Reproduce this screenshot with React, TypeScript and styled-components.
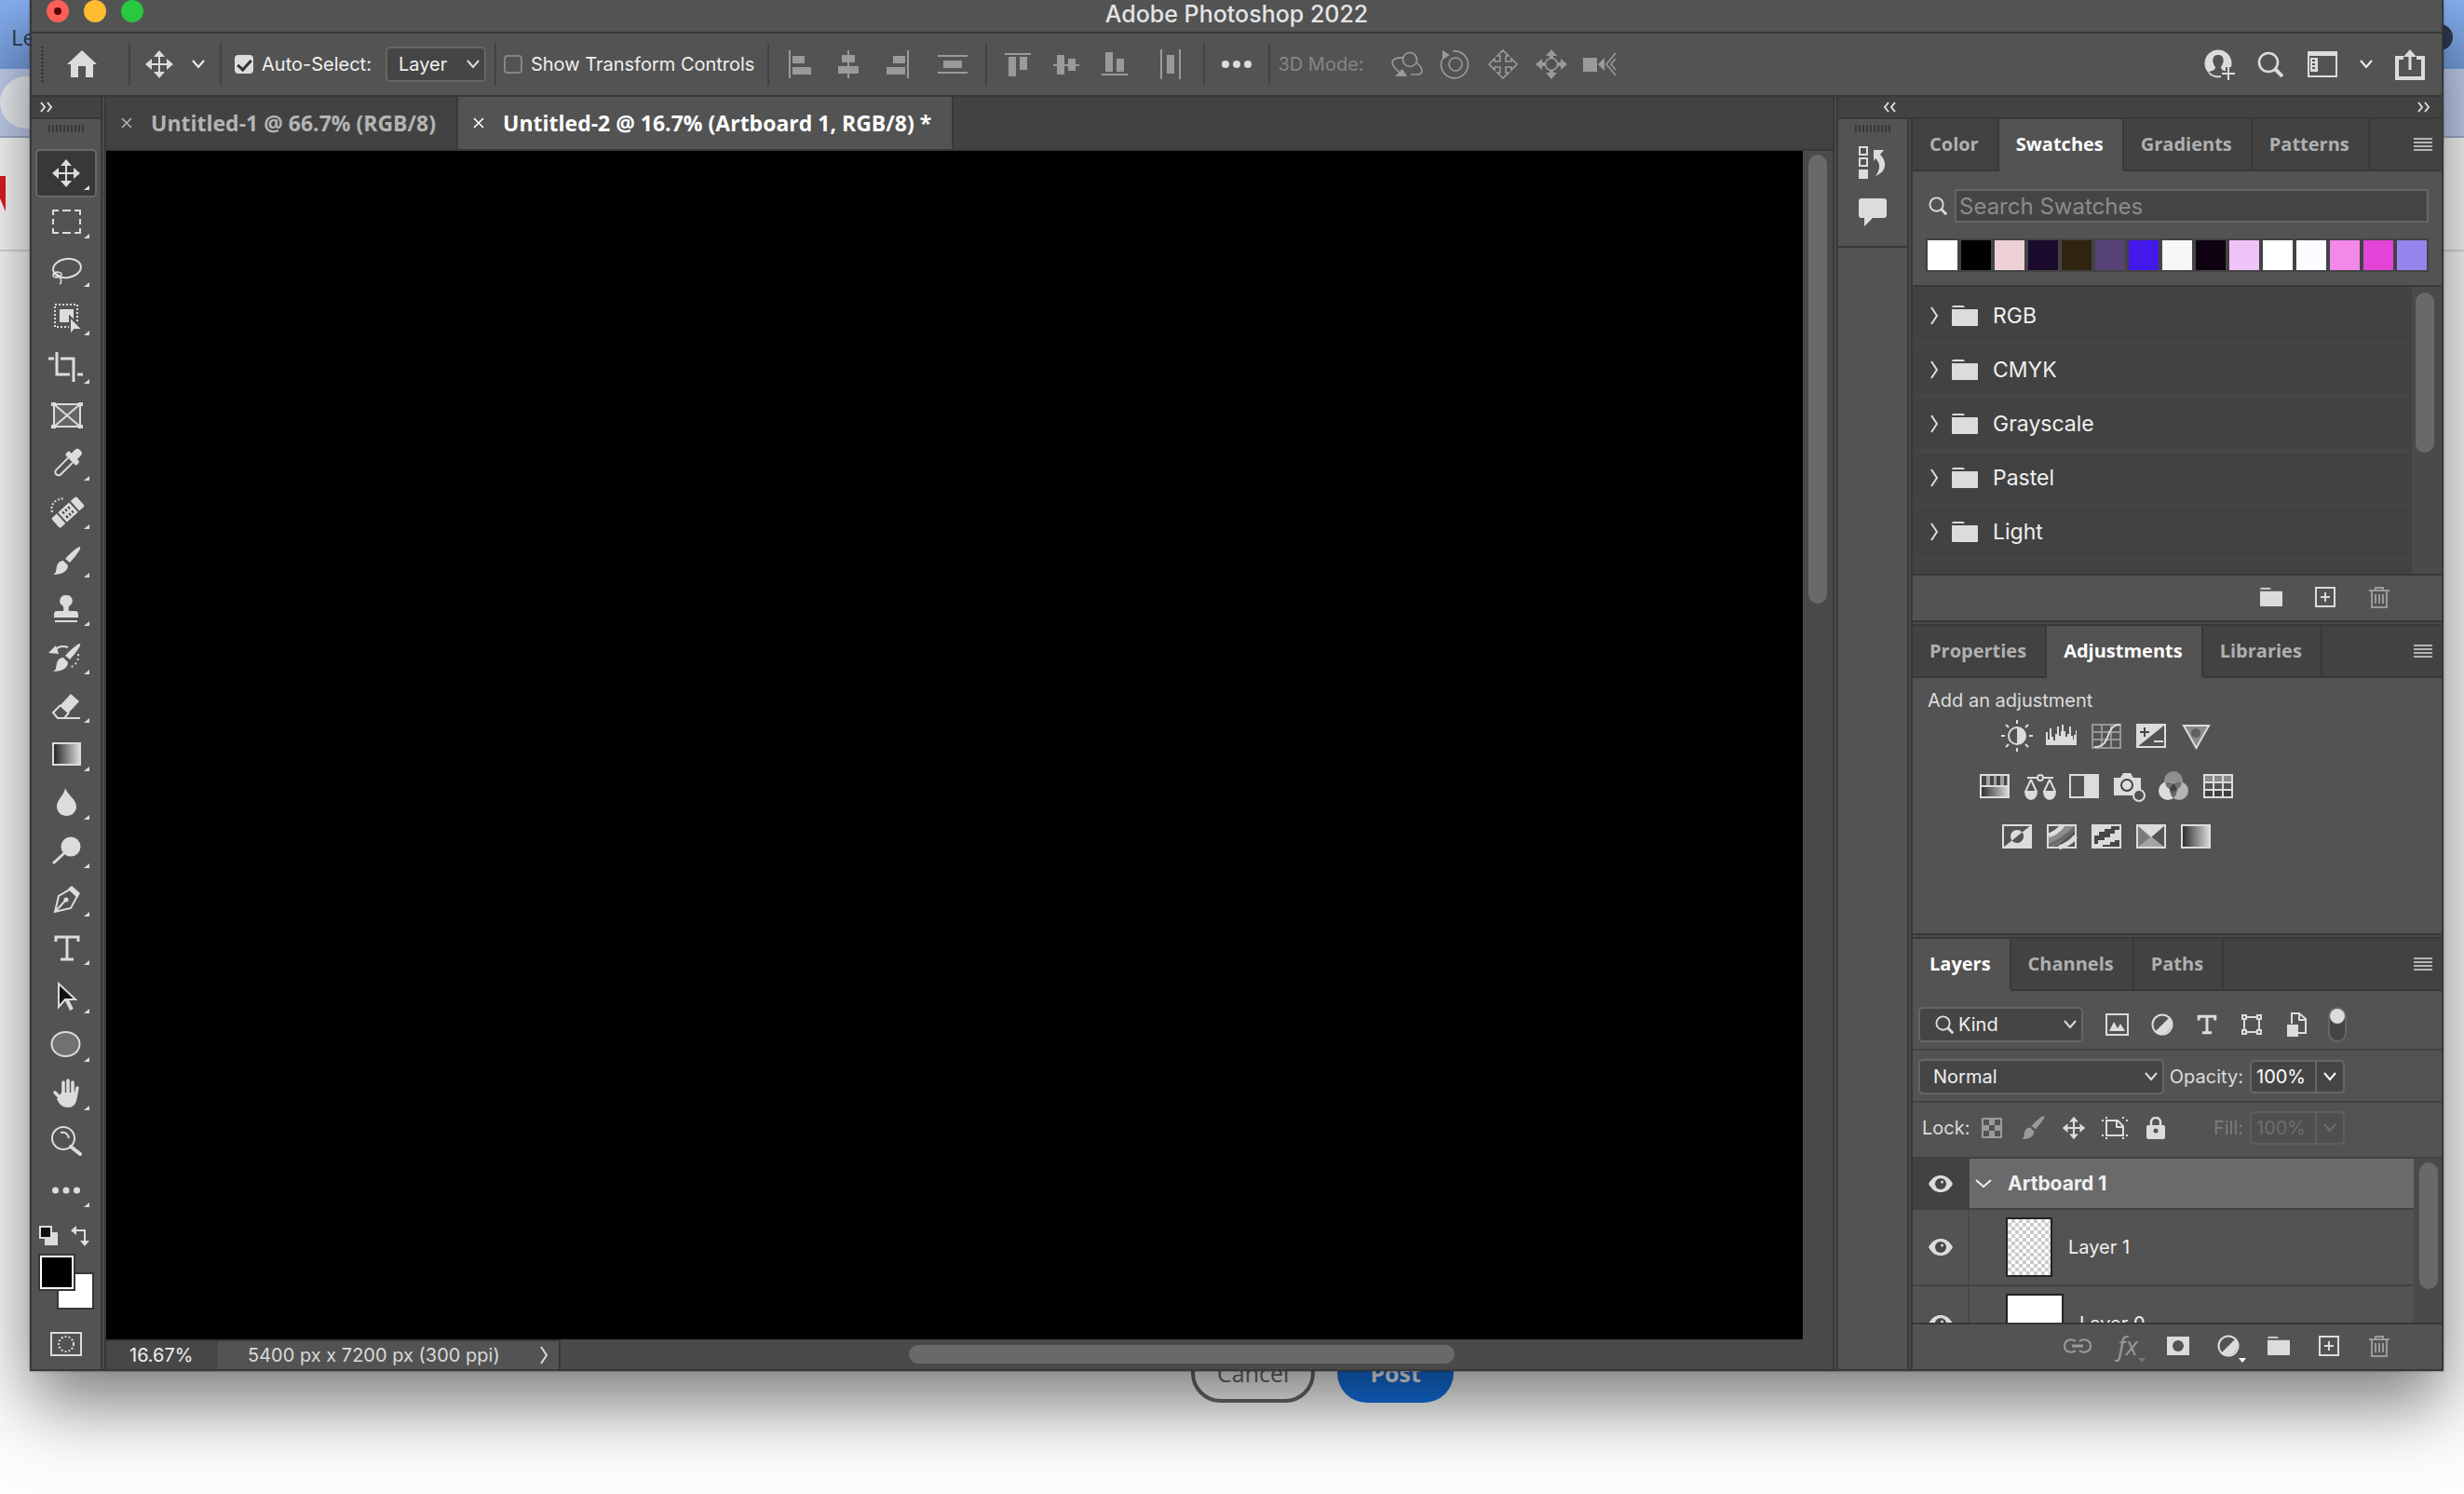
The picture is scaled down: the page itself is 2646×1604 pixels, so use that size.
import React from "react";
import styled, { createGlobalStyle, css } from "styled-components";

const c = {
  panel: "#535353",
  well: "#424242",
  track: "#4a4a4a",
  line: "#383838",
  edge: "#666666",
  icon: "#dcdcdc",
  muted: "#9a9a9a",
  text: "#f0f0f0",
};

const ui = `Inter, "Liberation Sans", sans-serif`;
const tabFont = `"Open Sans", "Noto Sans", sans-serif`;

const GlobalStyle = createGlobalStyle`
  * { box-sizing: border-box; }
  body { margin: 0; background: #fff; font-family: ${ui}; overflow: hidden; }
  button, input, select { font: inherit; color: inherit; margin: 0; }
  button { background: none; border: 0; padding: 0; cursor: pointer; }
  h1, h2, p, ul { margin: 0; padding: 0; font-weight: 400; }
  li { list-style: none; }
  svg { display: block; flex: none; }
`;

/* ---------- page behind the window ---------- */

const Desktop = styled.div`
  position: relative;
  display: flex;
  flex-direction: column;
  height: 100vh;
  overflow: hidden;
  background: #fdfdfd;
`;

const BrowserTabs = styled.div`
  display: flex;
  align-items: center;
  justify-content: space-between;
  height: 74px;
  padding: 6px 12px 0;
  background: linear-gradient(#86aff0, #759fde);
  color: #2d3a52;
  font: 400 24px/32px ${tabFont};
`;

const TabBadge = styled.span`
  width: 28px;
  height: 28px;
  border-radius: 50%;
  background: #2e3850;
`;

const AddressBar = styled.div`
  display: flex;
  align-items: center;
  height: 74px;
  background: #c3d0f0;
  border-bottom: 2px solid #a3b0cc;
`;

const AddressField = styled.div`
  width: 300px;
  height: 56px;
  border-radius: 28px;
  background: #eef2f6;
`;

const SiteHeader = styled.div`
  display: flex;
  align-items: center;
  height: 122px;
  border-bottom: 2px solid #dcdcdc;
`;

const SiteBody = styled.div`
  flex: 1;
  display: flex;
  align-items: flex-end;
  justify-content: center;
  gap: 24px;
  padding: 0 0 98px 194px;
`;

const PageButton = styled.button<{ $primary?: boolean }>`
  height: 64px;
  padding: 0 ${(p) => (p.$primary ? 35 : 24)}px;
  border-radius: 32px;
  border: ${(p) => (p.$primary ? "0" : "4px solid #6a6a6a")};
  background: ${(p) => (p.$primary ? "#1473e6" : "transparent")};
  color: ${(p) => (p.$primary ? "#fff" : "#6a6a6a")};
  font: ${(p) => (p.$primary ? 700 : 400)} 25px/32px ${tabFont};
`;

/* ---------- application window ---------- */

const Window = styled.div`
  position: absolute;
  inset: 0 22px 132px 32px;
  display: flex;
  flex-direction: column;
  border: 2px solid ${c.line};
  border-top: 0;
  background: ${c.panel};
  color: ${c.text};
  font-size: 20px;
  line-height: 24px;
  box-shadow: 0 0 2px rgba(0, 0, 0, 0.5), 0 34px 74px rgba(0, 0, 0, 0.52);
`;

const TitleBar = styled.header`
  display: grid;
  grid-template-columns: 1fr auto 1fr;
  height: 36px;
  border-bottom: 2px solid ${c.line};
`;

const Lights = styled.div`
  display: flex;
  gap: 16px;
  padding-left: 16px;
`;

const Light = styled.button<{ $color: string }>`
  display: grid;
  place-items: center;
  width: 24px;
  height: 24px;
  border-radius: 50%;
  background: ${(p) => p.$color};
`;

const LightDot = styled.span`
  width: 8px;
  height: 8px;
  border-radius: 50%;
  background: #5a0000;
`;

const AppTitle = styled.h1`
  font-size: 25px;
  line-height: 30px;
  font-weight: 500;
  color: #e4e4e4;
`;

const OptionsBar = styled.div`
  display: flex;
  align-items: center;
  height: 68px;
  padding: 0 18px 0 10px;
  border-bottom: 2px solid ${c.line};
`;

const Sep = styled.span`
  flex: none;
  width: 2px;
  height: 46px;
  background: ${c.well};
`;

const DotGrip = styled.span`
  width: 3px;
  height: 38px;
  background: repeating-linear-gradient(${c.line} 0 2px, transparent 2px 4px);
`;

const Grip = styled.span<{ $w: number }>`
  width: ${(p) => p.$w}px;
  height: 8px;
  background: repeating-linear-gradient(90deg, ${c.line} 0 2px, transparent 2px 4px);
`;

const OptionGroup = styled.div<{ $gap?: number; $pad?: string }>`
  display: flex;
  align-items: center;
  gap: ${(p) => p.$gap ?? 0}px;
  padding: ${(p) => p.$pad ?? "0"};
`;

const AlignGroup = styled(OptionGroup)`
  > :last-child { margin-left: 8px; }
`;

const IconButton = styled.button<{ $size?: number; $dim?: boolean; $menu?: boolean }>`
  position: relative;
  display: grid;
  place-items: center;
  width: ${(p) => p.$size ?? 32}px;
  height: ${(p) => p.$size ?? 32}px;
  color: ${(p) => (p.$dim ? c.muted : c.icon)};
  ${(p) =>
    p.$menu &&
    css`
      &::after {
        content: "";
        position: absolute;
        right: -3px;
        bottom: -2px;
        border: solid transparent;
        border-width: 5px 4px 0;
        border-top-color: ${p.$dim ? "#777" : "#fff"};
      }
    `}
`;

const CheckLabel = styled.label`
  display: flex;
  align-items: center;
  gap: 9px;
  white-space: nowrap;
`;

const Check = styled.input.attrs({ type: "checkbox" })`
  appearance: none;
  display: grid;
  place-items: center;
  width: 20px;
  height: 20px;
  border: 2px solid #858585;
  border-radius: 4px;
  &:checked {
    background: #dcdcdc;
    border-color: #dcdcdc;
  }
  &:checked::before {
    content: "";
    width: 6px;
    height: 12px;
    margin-bottom: 3px;
    border: solid #333;
    border-width: 0 3px 3px 0;
    transform: rotate(42deg);
  }
`;

const DimText = styled.span`
  margin-right: 7px;
  color: #858585;
  white-space: nowrap;
`;

const Spacer = styled.span`
  flex: 1;
`;

const Work = styled.div`
  flex: 1;
  min-height: 0;
  display: flex;
`;

const Splitter = styled.div`
  flex: none;
  width: 6px;
  border: solid ${c.line};
  border-width: 0 2px;
  background: ${c.track};
`;

/* ---------- tool column ---------- */

const ToolColumn = styled.nav`
  flex: none;
  width: 74px;
  display: flex;
  flex-direction: column;
  align-items: center;
`;

const Collapse = styled.div<{ $pad: string }>`
  display: flex;
  align-self: stretch;
  align-items: center;
  justify-content: space-between;
  height: 24px;
  padding: ${(p) => p.$pad};
  background: ${c.well};
  border-bottom: 2px solid ${c.line};
  color: ${c.icon};
`;

const ToolList = styled.div`
  display: flex;
  flex-direction: column;
  padding-top: 18px;
`;

const GripRow = styled.div`
  display: flex;
  justify-content: center;
  height: 14px;
  padding-top: 6px;
`;

const ToolButton = styled.button<{ $active?: boolean }>`
  width: 66px;
  height: 52px;
  border: 2px solid ${(p) => (p.$active ? "#686868" : "transparent")};
  border-radius: 5px;
  background: ${(p) => (p.$active ? c.line : "none")};
  color: ${c.icon};
`;

const MiniRow = styled.div`
  display: flex;
  justify-content: space-between;
  align-self: stretch;
  padding: 12px 12px 0 8px;
  color: ${c.icon};
`;

const ColorPair = styled.div`
  display: grid;
  grid-template: repeat(3, 20px) / repeat(3, 20px);
  margin-top: 8px;
`;

const ColorChip = styled.button<{ $color: string; $front?: boolean }>`
  grid-area: ${(p) => (p.$front ? "1 / 1 / 3 / 3" : "2 / 2 / 4 / 4")};
  z-index: ${(p) => (p.$front ? 1 : 0)};
  border: 2px solid ${c.line};
  background: ${(p) => p.$color};
  box-shadow: ${(p) => (p.$front ? "inset 0 0 0 2px #fff" : "none")};
`;

const MaskButton = styled.button`
  margin-top: 24px;
  color: ${c.icon};
`;

/* ---------- document ---------- */

const DocumentArea = styled.main`
  flex: 1;
  min-width: 0;
  display: flex;
  flex-direction: column;
`;

const DocTabs = styled.div`
  display: flex;
  height: 58px;
  background: ${c.well};
  border-bottom: 2px solid ${c.line};
`;

const DocTab = styled.div<{ $active?: boolean }>`
  display: flex;
  align-items: center;
  gap: 20px;
  padding: 0 22px 0 16px;
  border-right: 2px solid ${c.line};
  background: ${(p) => (p.$active ? c.panel : "none")};
  color: ${(p) => (p.$active ? "#fff" : "#b4b4b4")};
  font: 700 23px/28px ${tabFont};
  white-space: nowrap;
`;

const CanvasRow = styled.div`
  flex: 1;
  min-height: 0;
  display: flex;
`;

const Canvas = styled.div`
  flex: 1;
  background: #000;
`;

const ScrollTrack = styled.div<{ $w: number; $pad: string }>`
  flex: none;
  width: ${(p) => p.$w}px;
  padding: ${(p) => p.$pad};
  background: ${c.track};
`;

const Thumb = styled.div<{ $len: number }>`
  height: ${(p) => p.$len}%;
  border-radius: 10px;
  background: #696969;
`;

const StatusBar = styled.footer`
  display: flex;
  height: 32px;
  background: ${c.track};
`;

const Zoom = styled.input`
  width: 120px;
  padding: 0 0 0 25px;
  border: 0;
  border-top: 2px solid ${c.line};
  background: #474747;
`;

const DocInfo = styled.div`
  display: flex;
  align-items: center;
  justify-content: space-between;
  width: 368px;
  padding: 0 10px 0 32px;
  border: 2px solid ${c.line};
  border-width: 2px 2px 0 0;
  background: ${c.panel};
  color: #dadada;
  white-space: nowrap;
`;

const HTrack = styled.div`
  flex: 1;
  display: flex;
  justify-content: center;
  margin-right: 32px;
  padding: 6px 0;
`;

const HThumb = styled.div`
  width: 44%;
  border-radius: 10px;
  background: #696969;
`;

/* ---------- docked panels ---------- */

const Dock = styled.div`
  flex: none;
  display: flex;
  flex-direction: column;
`;

const DockBody = styled.div`
  flex: 1;
  min-height: 0;
  display: flex;
`;

const IconStrip = styled.div`
  width: 74px;
`;

const StripGroup = styled.div`
  display: flex;
  flex-direction: column;
  align-items: center;
  gap: 10px;
  height: 138px;
  border-bottom: 2px solid ${c.line};
`;

const Panels = styled.div`
  width: 568px;
  display: flex;
  flex-direction: column;
`;

const Panel = styled.section<{ $grow?: boolean }>`
  display: flex;
  flex-direction: column;
  ${(p) => p.$grow && css`flex: 1; min-height: 0;`}
`;

const PanelGap = styled.div`
  height: 6px;
  border: solid ${c.line};
  border-width: 2px 0;
  background: ${c.track};
`;

const TabStrip = styled.div`
  display: flex;
  height: 56px;
  background: ${c.well};
`;

const PanelTab = styled.button<{ $active?: boolean }>`
  padding: 0 20px 0 18px;
  border: solid ${c.line};
  border-width: 0 2px 2px 0;
  border-bottom-color: ${(p) => (p.$active ? c.panel : c.line)};
  background: ${(p) => (p.$active ? c.panel : "none")};
  color: ${(p) => (p.$active ? "#fff" : "#b0b0b0")};
  font: 700 20px/26px ${tabFont};
`;

const TabRest = styled.div`
  flex: 1;
  display: flex;
  align-items: center;
  justify-content: flex-end;
  padding-right: 10px;
  border-bottom: 2px solid ${c.line};
  color: #b4b4b4;
`;

const SearchRow = styled.label`
  display: flex;
  align-items: center;
  gap: 8px;
  padding: 19px 14px 0 17px;
  color: ${c.icon};
`;

const SearchField = styled.input`
  flex: 1;
  height: 36px;
  padding: 0 3px;
  border: 2px solid ${c.edge};
  background: #454545;
  font-size: 24px;
  &::placeholder { color: #8c8c8c; opacity: 1; }
`;

const SwatchStrip = styled.div`
  display: flex;
  align-self: flex-start;
  gap: 4px;
  margin: 17px 14px 14px;
  padding: 2px;
  background: #434343;
`;

const Swatch = styled.button<{ $color: string }>`
  width: 32px;
  height: 32px;
  background: ${(p) => p.$color};
`;

const FolderArea = styled.div`
  display: flex;
  height: 312px;
  border: solid ${c.line};
  border-width: 2px 0;
  background: ${c.well};
`;

const FolderList = styled.ul`
  flex: 1;
  padding: 4px 4px 0;
  overflow: hidden;
`;

const FolderRow = styled.li`
  display: flex;
  align-items: center;
  height: 58px;
  padding-left: 15px;
  border-bottom: 4px solid #464646;
  color: ${c.icon};
  font-size: 23px;
`;

const FolderName = styled.span`
  margin-left: 16px;
  color: ${c.text};
`;

const FolderIcon = styled.span`
  margin-left: 13px;
`;

const PanelFooter = styled.div<{ $gap: number }>`
  display: flex;
  align-items: center;
  justify-content: flex-end;
  gap: ${(p) => p.$gap}px;
  height: 48px;
  padding: 0 51px 2px 0;
`;

const AdjustBody = styled.div`
  height: 274px;
  padding: 12px 16px;
  color: ${c.icon};
`;

const AdjustRows = styled.div`
  display: inline-flex;
  flex-direction: column;
  gap: 20px;
  padding: 9px 0 0 55px;
`;

const AdjustRow = styled.div`
  display: flex;
  justify-content: center;
  gap: 14px;
`;

const ControlRow = styled.div<{ $pad: string }>`
  display: flex;
  align-items: center;
  justify-content: space-between;
  padding: ${(p) => p.$pad};
  border-bottom: 2px solid ${c.well};
`;

const SelectBox = styled.span<{ $w: number }>`
  display: grid;
  align-items: center;
  width: ${(p) => p.$w}px;
  > * { grid-area: 1 / 1; }
  > svg { z-index: 1; pointer-events: none; color: ${c.icon}; }
  > svg:last-child { justify-self: end; margin-right: 7px; }
  > svg:not(:last-child) { margin-left: 18px; }
`;

const Select = styled.select<{ $pad: number }>`
  appearance: none;
  width: 100%;
  height: 38px;
  padding: 0 24px 0 ${(p) => p.$pad}px;
  border: 2px solid ${c.edge};
  border-radius: 5px;
  background: #454545;
`;

const FilterSet = styled(OptionGroup)`
  > :last-child { margin-left: 2px; }
`;

const Toggle = styled.input.attrs({ type: "checkbox" })`
  appearance: none;
  width: 20px;
  height: 38px;
  padding: 0;
  border: 2px solid ${c.edge};
  border-radius: 10px;
  background: #454545;
  &::before {
    content: "";
    display: block;
    width: 16px;
    height: 16px;
    border-radius: 50%;
    background: ${c.icon};
  }
`;

const Meter = styled.div<{ $off?: boolean }>`
  display: flex;
  align-items: center;
  gap: 7px;
  color: ${(p) => (p.$off ? "#7c7c7c" : "#dcdcdc")};
`;

const MeterBox = styled.div<{ $off?: boolean }>`
  display: flex;
  width: 102px;
  height: 36px;
  border: 2px solid ${(p) => (p.$off ? "#5f5f5f" : c.edge)};
  border-radius: 5px;
  background: ${(p) => (p.$off ? "#4f4f4f" : "#454545")};
  color: ${(p) => (p.$off ? "#6e6e6e" : "#fff")};
`;

const MeterValue = styled.input`
  width: 70px;
  padding: 0 0 0 5px;
  border: 0;
  border-right: 2px solid ${c.edge};
  background: none;
  &:disabled { border-color: #5f5f5f; color: inherit; }
`;

const MeterArrow = styled.button`
  flex: 1;
  display: grid;
  place-items: center;
`;

const LockTools = styled.div`
  display: flex;
  align-items: center;
  gap: 8px;
  color: #dcdcdc;
`;

const LayerArea = styled.div`
  flex: 1;
  min-height: 0;
  display: flex;
  overflow: hidden;
  border-bottom: 2px solid ${c.line};
`;

const LayerList = styled.ul`
  flex: 1;
`;

const LayerRow = styled.li<{ $group?: boolean }>`
  display: flex;
  height: ${(p) => (p.$group ? 55 : 82)}px;
  border-bottom: 2px solid ${c.well};
`;

const EyeCell = styled.button<{ $dark?: boolean }>`
  width: 61px;
  display: grid;
  place-items: center;
  border-right: 2px solid ${(p) => (p.$dark ? c.well : "#484848")};
  background: ${(p) => (p.$dark ? c.well : "none")};
  color: ${c.icon};
`;

const LayerCell = styled.div<{ $selected?: boolean }>`
  flex: 1;
  display: flex;
  align-items: center;
  gap: 17px;
  padding-left: ${(p) => (p.$selected ? 6 : 39)}px;
  background: ${(p) => (p.$selected ? "#6a6a6a" : "none")};
  font-size: ${(p) => (p.$selected ? 21 : 20)}px;
  font-weight: ${(p) => (p.$selected ? 700 : 400)};
`;

const LayerThumb = styled.span<{ $w: number; $checker?: boolean }>`
  width: ${(p) => p.$w}px;
  height: 64px;
  border: 2px solid #222;
  background: ${(p) =>
    p.$checker ? "repeating-conic-gradient(#cbcbcb 0 25%, #fff 0 50%) 0 0 / 8px 8px" : "#fff"};
`;

const FxButton = styled(IconButton)`
  font: italic 400 27px/30px "Open Sans", sans-serif;
`;

/* ---------- icons ---------- */

type IconProps = { w: number; h?: number; children: React.ReactNode };

const Icon = ({ w, h = w, children }: IconProps) => (
  <svg width={w} height={h} viewBox={`0 0 ${w} ${h}`} fill="none" stroke="currentColor" strokeWidth="2" aria-hidden="true">
    {children}
  </svg>
);

const F = { fill: "currentColor", stroke: "none" };

const Chevron = ({ w = 14 }: { w?: number }) => (
  <Icon w={w} h={10}>
    <path d={`M1 1l${w / 2 - 1} 7 ${w / 2 - 1}-7`} />
  </Icon>
);

const RightChevron = () => (
  <Icon w={10} h={20}>
    <path d="M1 1l6 9-6 9" />
  </Icon>
);

const DoubleChevron = ({ left }: { left?: boolean }) => (
  <Icon w={14} h={12}>
    <path d={left ? "M6 1L2 6l4 5M13 1L9 6l4 5" : "M1 1l4 5-4 5M8 1l4 5-4 5"} />
  </Icon>
);

const Burger = () => (
  <Icon w={20} h={14}>
    <path d="M0 1h20M0 5h20M0 9h20M0 13h20" />
  </Icon>
);

const Close = () => (
  <Icon w={12}>
    <path d="M1 1l10 10M11 1L1 11" strokeWidth="1.6" />
  </Icon>
);

const Folder = ({ w = 28 }: { w?: number }) => (
  <svg width={w} height={w === 28 ? 22 : 20} viewBox="0 0 28 22" fill="currentColor" preserveAspectRatio="none" aria-hidden="true">
    <path d="M0 2q0-2 2-2h10q1 0 2 2zM0 4h27q1 0 1 1v16q0 1-1 1H1q-1 0-1-1z" />
  </svg>
);

const Plus = () => (
  <Icon w={22}>
    <path d="M1 1h20v20H1zM11 6v10M6 11h10" />
  </Icon>
);

const Trash = () => (
  <Icon w={22} h={24}>
    <path d="M0 5h22M3 5v18h16V5M7 5V2h8v3M7 9v10M11 9v10M15 9v10" />
  </Icon>
);

const Magnifier = ({ w = 28 }: { w?: number }) => (
  <svg width={w} height={w} viewBox="0 0 28 28" fill="none" stroke="currentColor" aria-hidden="true">
    <circle cx="12" cy="12" r="10" strokeWidth="2.6" />
    <path d="M19 19l8 8" strokeWidth="4" />
  </svg>
);

const MoveArt = () => (
  <>
    <path d="M20 8v24M8 20h24" />
    <path {...F} d="M20 5l6 7H14zM20 35l6-7H14zM5 20l7-6v12zM35 20l-7-6v12z" />
  </>
);

const MoveIcon = () => (
  <svg width="32" height="32" viewBox="4 4 32 32" fill="none" stroke="currentColor" strokeWidth="2" aria-hidden="true">
    <MoveArt />
  </svg>
);

const Brush = () => (
  <g {...F}>
    <path d="M35 5c1 2-2 7-11 17l-5-4C27 9 33 5 35 5z" />
    <path d="M17 20l5 5c0 6-6 10-16 10 4-2 3-5 4-9 1-4 4-6 7-6z" />
  </g>
);

const HalfCircle = () => (
  <Icon w={24}>
    <circle cx="12" cy="12" r="10.5" />
    <path {...F} d="M20 4A11.500 11.500 0 0 1 4 20z" />
  </Icon>
);

const Eye = () => (
  <Icon w={26} h={20}>
    <path {...F} d="M0 10C4 3 8 1 13 1s9 2 13 9c-4 7-8 9-13 9S4 17 0 10z" />
    <circle cx="13" cy="10" r="6" fill="#464646" stroke="none" />
    <circle cx="14.500" cy="8" r="1.500" {...F} />
  </Icon>
);

const TypeArt = () => <path d="M9 13V8h24v5M21 8v23M14 32h14" strokeWidth="3" />;

const tools: { name: string; art: React.ReactNode; plain?: boolean }[] = [
  { name: "Move", art: <MoveArt /> },
  { name: "Rectangular marquee", art: <path d="M6 13V8h6M16 8h9M29 8h6v5M35 17v6M35 27v5h-6M25 32h-9M12 32H6v-5M6 23v-6" /> },
  {
    name: "Lasso",
    art: (
      <>
        <ellipse cx="21" cy="18" rx="15" ry="10" transform="rotate(-8 21 18)" />
        <path d="M6 24c2-3 10-2 9 1s-8 4-9 1 6-3 8 3c1 3 1 5-1 6" strokeWidth="1.6" />
      </>
    ),
  },
  {
    name: "Object selection",
    art: (
      <>
        <path d="M8 5h24v24H8z" strokeDasharray="2 2" />
        <path {...F} d="M13 10h15v14H13z" />
        <path d="M24 18v20l5-6h9z" fill="currentColor" stroke={c.panel} />
      </>
    ),
  },
  { name: "Crop", art: <path d="M1 11h6M14 11h14v25M10 4v24h14M32 28h6" strokeWidth="3" /> },
  {
    name: "Frame",
    plain: true,
    art: (
      <>
        <path d="M7 8h28v24H7z" fill="#666" />
        <path d="M7 8l28 24M35 8L7 32" />
        <path {...F} d="M4 6h5v4H4zM33 6h5v4h-5zM4 30h5v4H4zM33 30h5v4h-5z" />
      </>
    ),
  },
  {
    name: "Eyedropper",
    art: (
      <g transform="rotate(45 20 20)">
        <rect x="16" y="-1" width="9" height="14" rx="4" {...F} />
        <rect x="12" y="8" width="17" height="6" rx="2" {...F} />
        <path d="M17 14v18a3.500 3.500 0 0 0 7 0V14" />
      </g>
    ),
  },
  {
    name: "Spot healing brush",
    art: (
      <>
        <path d="M5 20c-2-8 2-14 13-15" strokeDasharray="2 2" />
        <g transform="rotate(-42 22 20)">
          <rect x="4" y="13" width="36" height="14" rx="2" {...F} />
          <path d="M13 12v16M31 12v16" stroke={c.panel} />
          <path d="M17 17h2M21 17h2M25 17h2M17 23h2M21 23h2M25 23h2" stroke="#444" strokeWidth="3" />
        </g>
      </>
    ),
  },
  { name: "Brush", art: <Brush /> },
  {
    name: "Clone stamp",
    art: (
      <>
        <path {...F} d="M20 5a6 6 0 0 1 4 11q-2 2-1 6h7q3 0 3 4v3H7v-3q0-4 3-4h7q1-4-1-6a6 6 0 0 1 4-11z" />
        <path d="M8 33h24" />
      </>
    ),
  },
  {
    name: "History brush",
    art: (
      <>
        <Brush />
        <path d="M8 13c3-5 8-6 14-4" />
        <path {...F} d="M1 15l8-8 3 9z" />
        <path d="M33 16c1 8-3 12-9 15" strokeDasharray="2 3" />
      </>
    ),
  },
  {
    name: "Eraser",
    art: (
      <>
        <path {...F} d="M25 7l9 8-12 13-9-8z" />
        <path d="M14 19l-8 8 5 6h7l5-6M14 33h21" />
      </>
    ),
  },
  {
    name: "Gradient",
    art: (
      <>
        <defs>
          <linearGradient id="toolGradient">
            <stop stopColor="#222" />
            <stop offset="1" stopColor="#ddd" />
          </linearGradient>
        </defs>
        <path d="M6 8h29v23H6z" fill="url(#toolGradient)" />
      </>
    ),
  },
  { name: "Blur", art: <path {...F} d="M19 4c2 7 12 12 12 20 0 6-5 10-10.500 10S10 30 10 24c0-8 8-12 9-20z" /> },
  {
    name: "Dodge",
    art: (
      <>
        <circle cx="25" cy="15" r="10.500" {...F} />
        <path d="M18 22L6 33" strokeWidth="3" />
      </>
    ),
  },
  {
    name: "Pen",
    art: (
      <>
        <path d="M8 33l4-17 12-7 8 7-7 13zM9 32l10-11" />
        <circle cx="20" cy="20" r="2.500" {...F} />
        <path {...F} d="M22 8l4-3 9 8-3 5z" />
      </>
    ),
  },
  { name: "Type", art: <TypeArt /> },
  {
    name: "Path selection",
    art: (
      <>
        <path d="M20 22l6 12" strokeWidth="4" />
        <path d="M12 6v25l7-8h11z" fill="#111" />
      </>
    ),
  },
  { name: "Ellipse", art: <ellipse cx="19.500" cy="19" rx="15" ry="13" fill="#717171" /> },
  {
    name: "Hand",
    art: (
      <>
        <path d="M17 8v15M22 6v16M27 8v15M32 14l-2 10M8 19l8 8" strokeWidth="3.600" strokeLinecap="round" />
        <path {...F} d="M15 19h17c0 9-2 16-10 16-6 0-9-3-12-9z" />
      </>
    ),
  },
  {
    name: "Zoom",
    plain: true,
    art: (
      <>
        <circle cx="17" cy="16" r="12" />
        <path d="M14 10c5-1 8 2 9 6" />
        <path d="M25 25l10 8" strokeWidth="4" strokeLinecap="round" />
      </>
    ),
  },
  {
    name: "Edit toolbar",
    art: (
      <g {...F}>
        <circle cx="8.500" cy="20" r="3.500" />
        <circle cx="20" cy="20" r="3.500" />
        <circle cx="31.500" cy="20" r="3.500" />
      </g>
    ),
  },
];

const alignIcons: [string, string, string][] = [
  ["Align left edges", "M5 1v30", "M8 7h13v8H8zM8 19h20v8H8z"],
  ["Align horizontal centers", "M16 1v30", "M9 6h14v8H9zM5 18h22v8H5z"],
  ["Align right edges", "M28 1v30", "M12 7h13v8H12zM5 19h20v8H5z"],
  ["Distribute vertically", "M0 7h32M0 25h32", "M6 12h20v8H6z"],
];

const alignIcons2: [string, string, string][] = [
  ["Align top edges", "M2 5h28", "M6 8h8v21H6zM18 8h8v14h-8z"],
  ["Align vertical centers", "M2 17h28", "M6 6h8v21H6zM18 10h8v13h-8z"],
  ["Align bottom edges", "M2 27h28", "M6 3h8v21H6zM18 10h8v14h-8z"],
  ["Distribute horizontally", "M6 0v32M26 0v32", "M12 6h8v20h-8z"],
];

const modeIcons: [string, React.ReactNode][] = [
  [
    "Orbit",
    <>
      <circle cx="20" cy="11" r="7.500" />
      <path d="M13 9C4 8-1 12 2 17c2 4 7 8 12 11M27 14c8 7 8 13 0 13h-6" />
      <path {...F} d="M12 21l5 8H4z" />
    </>,
  ],
  [
    "Roll",
    <>
      <circle cx="17" cy="16" r="7" />
      <path d="M14 2a14.500 14.500 0 1 1-11 8" />
      <path {...F} d="M3 1l8 5-8 5z" />
    </>,
  ],
  [
    "Pan",
    <path d="M16 1l6 6h-3v6h6v-3l6 6-6 6v-3h-6v6h3l-6 6-6-6h3v-6H7v3l-6-6 6-6v3h6V7h-3z" />,
  ],
  [
    "Slide",
    <>
      <circle cx="16" cy="16" r="6.500" />
      <path {...F} d="M16 0l6 7h-4v3h-4V7h-4zM16 32l6-7h-4v-3h-4v3h-4zM-1 16l7-6v4h3v4H6v4zM33 16l-7-6v4h-3v4h3v4z" />
    </>,
  ],
  [
    "Camera zoom",
    <>
      <path {...F} d="M-2 9h15v15H-2zM14 16l7-7v14z" />
      <path d="M33 4L23 16l10 12M33 10l-5 6 5 6" />
    </>,
  ],
];

const AdjBox = ({ children }: { children: React.ReactNode }) => (
  <Icon w={34}>
    {children}
    <path d="M2 5h30v24H2z" />
  </Icon>
);

const adjustments: [string, React.ReactNode][][] = [
  [
    [
      "Brightness/Contrast",
      <Icon w={34}>
        <circle cx="17" cy="17" r="9" />
        <path {...F} d="M17 8a9 9 0 0 1 0 18z" />
        <path d="M17 0v4M17 30v4M0 17h4M30 17h4M5 5l3 3M26 26l3 3M29 5l-3 3M8 26l-3 3" />
      </Icon>,
    ],
    [
      "Levels",
      <Icon w={36} h={34}>
        <path {...F} d="M0 27V13h2v8h2V9h2v9h2v4h2v-7h2V7h2v10h2v-5h1V5h2v7h2v6h2v-3h2V7h2v10h2v4h1v-5h2v-5h1v16z" />
      </Icon>,
    ],
    [
      "Curves",
      <Icon w={34}>
        <path d="M2 5h30v25H2zM12 5v25M22 5v25M2 13h30M2 21h30" stroke="#969696" />
        <path d="M4 29C24 29 14 5 32 5" />
      </Icon>,
    ],
    [
      "Exposure",
      <AdjBox>
        <path {...F} d="M2 5h30L2 29z" />
        <path d="M10 8v10M5 13h10" stroke="#444" />
        <path d="M20 23h10" />
      </AdjBox>,
    ],
    [
      "Vibrance",
      <Icon w={34}>
        <path d="M4 6h27L17.500 30z" fill="#8a8a8a" />
        <circle cx="17" cy="14" r="5" fill="#606060" stroke="none" />
      </Icon>,
    ],
  ],
  [
    [
      "Hue/Saturation",
      <AdjBox>
        <path fill="url(#adjGradient)" stroke="none" d="M2 17h30v12H2z" />
        <path fill="#a0a0a0" stroke="none" d="M2 5h30v12H2z" />
        <path fill="#444" stroke="none" d="M3 5h5v11H3zM12 5h4v11h-4zM19 5h4v11h-4zM27 5h3v11h-3z" />
        <path d="M2 17h30" />
      </AdjBox>,
    ],
    [
      "Color balance",
      <Icon w={36} h={34}>
        <circle cx="18" cy="8" r="3" />
        <path d="M4 8h11M21 8h11M8 10L2 23M8 10l6 13M28 10l-6 13M28 10l6 13" />
        <path {...F} d="M1 22h14q0 9-7 10-7-1-7-10zM21 22h14q0 9-7 10-7-1-7-10z" />
      </Icon>,
    ],
    [
      "Black & White",
      <AdjBox>
        <path {...F} d="M17 5h15v24H17z" />
      </AdjBox>,
    ],
    [
      "Photo filter",
      <Icon w={36} h={34}>
        <path {...F} d="M1 8h7l3-5h8l3 5h8v19H1z" />
        <circle cx="15" cy="16" r="6" stroke="#444" />
        <circle cx="28" cy="27" r="6" fill="#535353" />
      </Icon>,
    ],
    [
      "Channel mixer",
      <Icon w={34}>
        <g stroke="none">
          <circle cx="17" cy="11" r="10" fill="#8f8f8f" />
          <circle cx="11" cy="22" r="10" fill="#dcdcdc" />
          <circle cx="23" cy="22" r="10" fill="#b4b4b4" />
          <path d="M17 14q4 4 4 8-1 5-4 8-3-3-4-8 0-4 4-8z" fill="#666" />
          <path d="M8 13q5-2 9 2 4-4 9-2-1 6-6 8h-6q-5-2-6-8z" fill="#707070" />
          <path d="M17 14q3 3 4 7-4 3-8 0 1-4 4-7z" fill="#424242" />
        </g>
      </Icon>,
    ],
    [
      "Color lookup",
      <AdjBox>
        <path d="M2 5h30v8H2z" fill="#8a8a8a" stroke="none" />
        <path d="M2 21h30v8H2z" fill="#404040" stroke="none" />
        <path d="M12 5v24M22 5v24M2 13h30M2 21h30" />
      </AdjBox>,
    ],
  ],
  [
    [
      "Invert",
      <AdjBox>
        <path {...F} d="M32 5v24H2z" />
        <circle cx="17" cy="17" r="7" {...F} />
        <path d="M22.500 12.500A7 7 0 0 1 11.500 21.500z" fill="#535353" stroke="none" />
      </AdjBox>,
    ],
    [
      "Posterize",
      <AdjBox>
        <path d="M2 18Q14 14 20 5h12v4Q18 24 6 29H2z" fill="#8c8c8c" stroke="none" />
        <path d="M3 16q9-3 15-11M14 29q12-4 18-12" strokeWidth="5" />
        <path d="M3 27Q20 20 32 7" stroke="#6a6a6a" strokeWidth="4" />
      </AdjBox>,
    ],
    [
      "Threshold",
      <AdjBox>
        <path {...F} d="M2 5h30v24H2z" />
        <path d="M4 21v-5h5v-4h6V9h7V6h9v4h-5v4h-5v4h-6v3H8v4H4zM13 28v-2h8v-3h5v-2h5v7z" fill="#464646" stroke="none" />
      </AdjBox>,
    ],
    [
      "Selective color",
      <AdjBox>
        <path d="M2 5l15 12L2 29z" fill="#7a7a7a" stroke="none" />
        <path d="M2 29l15-12 15 12z" fill="#a4a4a4" stroke="none" />
        <path {...F} d="M2 5h30L17 18z" />
      </AdjBox>,
    ],
    [
      "Gradient map",
      <AdjBox>
        <defs>
          <linearGradient id="adjGradient">
            <stop stopColor="#2a2a2a" />
            <stop offset="1" stopColor="#dcdcdc" />
          </linearGradient>
        </defs>
        <path fill="url(#adjGradient)" stroke="none" d="M2 5h30v24H2z" />
      </AdjBox>,
    ],
  ],
];

const filterIcons: [string, React.ReactNode][] = [
  [
    "Filter for pixel layers",
    <Icon w={26} h={24}>
      <path d="M1 1h23v22H1z" />
      <path {...F} d="M4 19l5-10 4 7 3-5 5 8z" />
    </Icon>,
  ],
  ["Filter for adjustment layers", <HalfCircle />],
  [
    "Filter for type layers",
    <svg width="22" height="22" viewBox="6 5 30 30" fill="none" stroke="currentColor" aria-hidden="true">
      <path d="M9 14V8h24v6M21 8v23M14 32h14" strokeWidth="4" />
    </svg>,
  ],
  [
    "Filter for shape layers",
    <Icon w={24}>
      <path d="M4 4h16v16H4z" />
      <path d="M2 2h4v4H2zM18 2h4v4h-4zM2 18h4v4H2zM18 18h4v4h-4z" fill={c.panel} />
    </Icon>,
  ],
  [
    "Filter for smart objects",
    <Icon w={22} h={26}>
      <path d="M6 12V1h8l7 6v15h-8M14 1v7h7" />
      <path {...F} d="M1 13h12v13H1z" />
    </Icon>,
  ],
];

const lockIcons: [string, React.ReactNode, boolean][] = [
  [
    "Lock transparent pixels",
    <Icon w={22}>
      <path d="M1 1h20v20H1z" />
      <path {...F} d="M8 1h6v7H8zM1 8h7v6H1zM14 8h7v6h-7zM8 14h6v7H8z" />
    </Icon>,
    true,
  ],
  [
    "Lock image pixels",
    <svg width="28" height="28" viewBox="4 4 33 33" fill="none" aria-hidden="true">
      <Brush />
    </svg>,
    true,
  ],
  [
    "Lock position",
    <svg width="26" height="26" viewBox="4 4 32 32" fill="none" stroke="currentColor" strokeWidth="2.500" aria-hidden="true">
      <MoveArt />
    </svg>,
    false,
  ],
  [
    "Prevent auto-nesting",
    <Icon w={28} h={24}>
      <path d="M5 4h12l6 6v10H5zM16 4v7h7" />
      <path d="M5 0v2M23 0v2M0 4h2M26 4h2M0 20h2M26 20h2M5 22v2M23 22v2" />
    </Icon>,
    false,
  ],
  [
    "Lock all",
    <Icon w={20} h={24}>
      <path d="M5 10V6a5 5 0 0 1 10 0v4" strokeWidth="2.500" />
      <path {...F} d="M2 9h16q2 0 2 2v11q0 2-2 2H2q-2 0-2-2V11q0-2 2-2z" />
      <circle cx="10" cy="15" r="2.500" fill={c.panel} stroke="none" />
    </Icon>,
    false,
  ],
];

const swatches = [
  "#ffffff", "#000000", "#ecd0d6", "#1a0a2c", "#2e2410", "#564274", "#4318ea", "#f6f7f8",
  "#0e0110", "#eec4f8", "#ffffff", "#fcfbff", "#f288e8", "#e244d8", "#9684ec",
];

const folders = ["RGB", "CMYK", "Grayscale", "Pastel", "Light"];

/* ---------- composed parts ---------- */

const Tabs = ({ names, active }: { names: string[]; active: string }) => (
  <TabStrip role="tablist">
    {names.map((n) => (
      <PanelTab key={n} role="tab" aria-selected={n === active} $active={n === active}>
        {n}
      </PanelTab>
    ))}
    <TabRest>
      <button aria-label="Panel menu">
        <Burger />
      </button>
    </TabRest>
  </TabStrip>
);

const Drop = ({ w, pad, label, value, lead }: { w: number; pad: number; label: string; value: string; lead?: React.ReactNode }) => (
  <SelectBox $w={w}>
    {lead}
    <Select $pad={pad} aria-label={label} defaultValue={value}>
      <option>{value}</option>
    </Select>
    <Chevron />
  </SelectBox>
);

const Percent = ({ label, off }: { label: string; off?: boolean }) => (
  <Meter $off={off}>
    <label htmlFor={label}>{label}:</label>
    <MeterBox $off={off}>
      <MeterValue id={label} defaultValue="100%" disabled={off} />
      <MeterArrow aria-label={`${label} slider`} disabled={off}>
        <Chevron />
      </MeterArrow>
    </MeterBox>
  </Meter>
);

const AlignSet = ({ set }: { set: [string, string, string][] }) => (
  <AlignGroup $gap={20} $pad="0 19px 0 17px">
    {set.map(([name, line, block]) => (
      <IconButton key={name} aria-label={name} $dim>
        <Icon w={32}>
          <path d={line} />
          <path {...F} d={block} />
        </Icon>
      </IconButton>
    ))}
  </AlignGroup>
);

export default function App() {
  return (
    <Desktop>
      <GlobalStyle />
      <BrowserTabs>
        <span>Le</span>
        <TabBadge />
      </BrowserTabs>
      <AddressBar>
        <AddressField />
      </AddressBar>
      <SiteHeader>
        <svg width="32" height="38" viewBox="0 0 32 38" aria-hidden="true">
          <path d="M0 0h6v38L0 24z" fill="#e31b23" />
        </svg>
      </SiteHeader>
      <SiteBody>
        <PageButton>Cancel</PageButton>
        <PageButton $primary>Post</PageButton>
      </SiteBody>

      <Window>
        <TitleBar>
          <Lights>
            <Light $color="#fe5f57" aria-label="Close window">
              <LightDot />
            </Light>
            <Light $color="#febc2e" aria-label="Minimize window" />
            <Light $color="#28c840" aria-label="Zoom window" />
          </Lights>
          <AppTitle>Adobe Photoshop 2022</AppTitle>
        </TitleBar>

        <OptionsBar>
          <DotGrip />
          <OptionGroup $pad="0 34px 0 25px">
            <IconButton aria-label="Home">
              <Icon w={32}>
                <path {...F} d="M16 1l16 15h-4v14h-8V18h-8v12H4V16H0z" />
              </Icon>
            </IconButton>
          </OptionGroup>
          <Sep />
          <OptionGroup $gap={19} $pad="0 16px 0 15px">
            <IconButton aria-label="Move tool">
              <MoveIcon />
            </IconButton>
            <Chevron />
          </OptionGroup>
          <Sep />
          <OptionGroup $gap={15} $pad="0 9px 0 14px">
            <CheckLabel>
              <Check defaultChecked />
              Auto-Select:
            </CheckLabel>
            <Drop w={108} pad={12} label="Auto-select target" value="Layer" />
          </OptionGroup>
          <Sep />
          <OptionGroup $pad="0 14px 0 8px">
            <CheckLabel>
              <Check />
              Show Transform Controls
            </CheckLabel>
          </OptionGroup>
          <Sep />
          <AlignSet set={alignIcons} />
          <Sep />
          <AlignSet set={alignIcons2} />
          <Sep />
          <OptionGroup $pad="0 18px">
            <IconButton aria-label="More options">
              <Icon w={32}>
                <g {...F}>
                  <circle cx="4" cy="16" r="4" />
                  <circle cx="16" cy="16" r="4" />
                  <circle cx="28" cy="16" r="4" />
                </g>
              </Icon>
            </IconButton>
          </OptionGroup>
          <Sep />
          <OptionGroup $gap={20} $pad="0 0 0 8px">
            <DimText>3D Mode:</DimText>
            {modeIcons.map(([name, art]) => (
              <IconButton key={name} aria-label={name} $dim>
                <svg width="36" height="32" viewBox="-2 0 36 32" fill="none" stroke="currentColor" strokeWidth="1.600" aria-hidden="true">
                  {art}
                </svg>
              </IconButton>
            ))}
          </OptionGroup>
          <Spacer />
          <OptionGroup $gap={24}>
            <IconButton aria-label="Account">
              <Icon w={34}>
                <circle cx="16" cy="15" r="14.500" {...F} />
                <path d="M16 6c7 0 7 8 3 13 0 4 5 4 8 6l-5 6H10l-5-6c3-2 8-2 8-6-4-5-4-13 3-13z" fill={c.panel} stroke="none" />
                <path d="M6 25c3 4 9 5 13 4" />
                <path d="M20 26h14M27 19v14" stroke={c.panel} strokeWidth="6" />
                <path d="M20 26h14M27 19v14" />
              </Icon>
            </IconButton>
            <IconButton aria-label="Search">
              <Magnifier />
            </IconButton>
            <IconButton aria-label="Choose a workspace">
              <Icon w={32} h={28}>
                <path d="M1 1h30v26H1z" />
                <path {...F} d="M0 0h32v5H0zM3 7h8v15H3z" />
                <path d="M5 9h3v2H5zM5 13h3v2H5zM5 17h3v2H5z" fill={c.panel} stroke="none" />
              </Icon>
            </IconButton>
            <Chevron />
            <IconButton aria-label="Share">
              <Icon w={32} h={34}>
                <path d="M9 9H2v22h28V9h-7" strokeWidth="4" />
                <path d="M16 6v16" strokeWidth="3" />
                <path {...F} d="M16 0l7 8H9z" />
              </Icon>
            </IconButton>
          </OptionGroup>
        </OptionsBar>

        <Work>
          <ToolColumn>
            <Collapse $pad="0 9px">
              <DoubleChevron />
            </Collapse>
            <GripRow>
              <Grip $w={38} />
            </GripRow>
            <ToolList>
              {tools.map((t, i) => (
                <ToolButton key={t.name} aria-label={t.name} $active={i === 0}>
                  <Icon w={62} h={48}>
                    <g transform="translate(11 4)">{t.art}</g>
                    {!t.plain && <path {...F} d="M56 37v5h-6z" />}
                  </Icon>
                </ToolButton>
              ))}
            </ToolList>
            <MiniRow>
              <button aria-label="Default colors">
                <Icon w={20} h={22}>
                  <path {...F} d="M6 7h14v14H6z" />
                  <path d="M1 1h12v12H1z" fill="#111" />
                </Icon>
              </button>
              <button aria-label="Switch colors">
                <Icon w={20} h={22}>
                  <path d="M5 5h10v12" />
                  <path {...F} d="M0 5l6-5v10zM15 22l-5-6h10z" />
                </Icon>
              </button>
            </MiniRow>
            <ColorPair>
              <ColorChip $front $color="#000" aria-label="Foreground color" />
              <ColorChip $color="#fff" aria-label="Background color" />
            </ColorPair>
            <MaskButton aria-label="Quick mask">
              <Icon w={34} h={26}>
                <path d="M1 1h32v24H1z" />
                <circle cx="17" cy="13" r="8" strokeDasharray="2 2" />
              </Icon>
            </MaskButton>
          </ToolColumn>

          <Splitter />

          <DocumentArea>
            <DocTabs role="tablist">
              <DocTab>
                <button aria-label="Close Untitled-1">
                  <Close />
                </button>
                <button role="tab" aria-selected="false">Untitled-1 @ 66.7% (RGB/8)</button>
              </DocTab>
              <DocTab $active>
                <button aria-label="Close Untitled-2">
                  <Close />
                </button>
                <button role="tab" aria-selected="true">Untitled-2 @ 16.7% (Artboard 1, RGB/8) *</button>
              </DocTab>
            </DocTabs>
            <CanvasRow>
              <Canvas />
              <ScrollTrack $w={32} $pad="4px 6px">
                <Thumb $len={38} />
              </ScrollTrack>
            </CanvasRow>
            <StatusBar>
              <Zoom aria-label="Zoom level" defaultValue="16.67%" />
              <DocInfo>
                <span>5400 px x 7200 px (300 ppi)</span>
                <RightChevron />
              </DocInfo>
              <HTrack>
                <HThumb />
              </HTrack>
            </StatusBar>
          </DocumentArea>

          <Splitter />

          <Dock>
            <Collapse $pad="0 12px 0 48px">
              <DoubleChevron left />
              <DoubleChevron />
            </Collapse>
            <DockBody>
              <IconStrip>
                <StripGroup>
                  <GripRow>
                    <Grip $w={38} />
                  </GripRow>
                  <IconButton aria-label="History" $size={44}>
                    <Icon w={30} h={36}>
                      <path d="M1 2h8v8H1zM1 14h8v8H1z" />
                      <path {...F} d="M0 26h10v10H0zM16 5h11l-4 5c8 8 7 18-5 23 6-8 5-14 0-19l-2 3z" />
                    </Icon>
                  </IconButton>
                  <IconButton aria-label="Comments" $size={44}>
                    <Icon w={30}>
                      <path {...F} d="M3 0h24q3 0 3 3v15q0 3-3 3H15l-9 9v-9H3q-3 0-3-3V3q0-3 3-3z" />
                    </Icon>
                  </IconButton>
                </StripGroup>
              </IconStrip>

              <Splitter />

              <Panels>
                <Panel aria-label="Swatches">
                  <Tabs names={["Color", "Swatches", "Gradients", "Patterns"]} active="Swatches" />
                  <SearchRow>
                    <Magnifier w={20} />
                    <SearchField placeholder="Search Swatches" aria-label="Search Swatches" />
                  </SearchRow>
                  <SwatchStrip>
                    {swatches.map((s, i) => (
                      <Swatch key={i} $color={s} aria-label={`Swatch ${s}`} />
                    ))}
                  </SwatchStrip>
                  <FolderArea>
                    <FolderList>
                      {folders.map((f) => (
                        <FolderRow key={f}>
                          <RightChevron />
                          <FolderIcon>
                            <Folder />
                          </FolderIcon>
                          <FolderName>{f}</FolderName>
                        </FolderRow>
                      ))}
                    </FolderList>
                    <ScrollTrack $w={32} $pad="6px 8px 0 4px">
                      <Thumb $len={57} />
                    </ScrollTrack>
                  </FolderArea>
                  <PanelFooter $gap={26}>
                    <IconButton aria-label="New group">
                      <Folder w={24} />
                    </IconButton>
                    <IconButton aria-label="New swatch">
                      <Plus />
                    </IconButton>
                    <IconButton aria-label="Delete swatch" $dim>
                      <Trash />
                    </IconButton>
                  </PanelFooter>
                </Panel>

                <PanelGap />

                <Panel aria-label="Adjustments">
                  <Tabs names={["Properties", "Adjustments", "Libraries"]} active="Adjustments" />
                  <AdjustBody>
                    <p>Add an adjustment</p>
                    <AdjustRows>
                      {adjustments.map((row, i) => (
                        <AdjustRow key={i}>
                          {row.map(([name, art]) => (
                            <IconButton key={name} aria-label={name} $size={34}>
                              {art}
                            </IconButton>
                          ))}
                        </AdjustRow>
                      ))}
                    </AdjustRows>
                  </AdjustBody>
                </Panel>

                <PanelGap />

                <Panel $grow aria-label="Layers">
                  <Tabs names={["Layers", "Channels", "Paths"]} active="Layers" />
                  <ControlRow $pad="17px 102px 7px 6px">
                    <Drop w={177} pad={41} label="Filter type" value="Kind" lead={<Magnifier w={20} />} />
                    <FilterSet $gap={16}>
                      {filterIcons.map(([name, art]) => (
                        <IconButton key={name} aria-label={name}>
                          {art}
                        </IconButton>
                      ))}
                      <Toggle aria-label="Layer filtering" />
                    </FilterSet>
                  </ControlRow>
                  <ControlRow $pad="9px 104px 7px 6px">
                    <Drop w={264} pad={14} label="Blend mode" value="Normal" />
                    <Percent label="Opacity" />
                  </ControlRow>
                  <ControlRow $pad="9px 104px 13px 10px">
                    <LockTools>
                      <span>Lock:</span>
                      <OptionGroup $gap={12}>
                        {lockIcons.map(([name, art, dim]) => (
                          <IconButton key={name} aria-label={name} $dim={dim}>
                            {art}
                          </IconButton>
                        ))}
                      </OptionGroup>
                    </LockTools>
                    <Percent label="Fill" off />
                  </ControlRow>
                  <LayerArea>
                    <LayerList>
                      <LayerRow $group>
                        <EyeCell $dark aria-label="Toggle Artboard 1">
                          <Eye />
                        </EyeCell>
                        <LayerCell $selected>
                          <Chevron w={18} />
                          Artboard 1
                        </LayerCell>
                      </LayerRow>
                      <LayerRow>
                        <EyeCell aria-label="Toggle Layer 1">
                          <Eye />
                        </EyeCell>
                        <LayerCell>
                          <LayerThumb $w={50} $checker />
                          Layer 1
                        </LayerCell>
                      </LayerRow>
                      <LayerRow>
                        <EyeCell aria-label="Toggle Layer 0">
                          <Eye />
                        </EyeCell>
                        <LayerCell>
                          <LayerThumb $w={62} />
                          Layer 0
                        </LayerCell>
                      </LayerRow>
                    </LayerList>
                    <ScrollTrack $w={30} $pad="4px 4px 0 6px">
                      <Thumb $len={79} />
                    </ScrollTrack>
                  </LayerArea>
                  <PanelFooter $gap={22}>
                    <IconButton aria-label="Link layers" $dim>
                      <Icon w={30} h={16}>
                        <path d="M13 3C9 0 1 1 1 8s8 8 12 5M17 3c4-3 12-2 12 5s-8 8-12 5" />
                        <path d="M9 8h12" strokeWidth="3" />
                      </Icon>
                    </IconButton>
                    <FxButton aria-label="Layer style" $dim $menu>fx</FxButton>
                    <IconButton aria-label="Add mask">
                      <Icon w={26} h={20}>
                        <path {...F} d="M1 0h24v20H1z" />
                        <circle cx="13" cy="10" r="6" fill={c.panel} stroke="none" />
                      </Icon>
                    </IconButton>
                    <IconButton aria-label="New adjustment layer" $menu>
                      <HalfCircle />
                    </IconButton>
                    <IconButton aria-label="New layer group">
                      <Folder w={24} />
                    </IconButton>
                    <IconButton aria-label="New layer">
                      <Plus />
                    </IconButton>
                    <IconButton aria-label="Delete layer" $dim>
                      <Trash />
                    </IconButton>
                  </PanelFooter>
                </Panel>
              </Panels>
            </DockBody>
          </Dock>
        </Work>
      </Window>
    </Desktop>
  );
}
